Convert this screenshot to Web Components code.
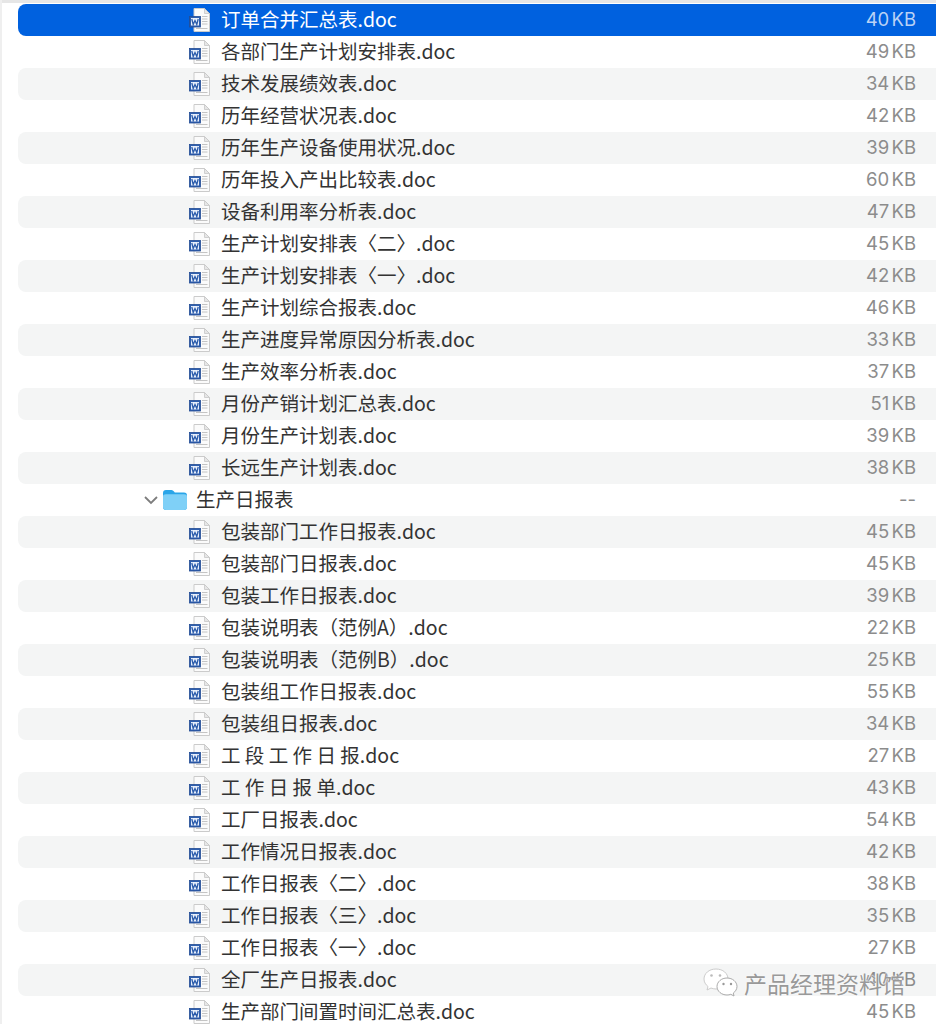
<!DOCTYPE html>
<html><head><meta charset="utf-8"><style>
html,body{margin:0;padding:0;background:#fff;overflow:hidden;height:1024px}
</style></head><body>
<file-list id="l"></file-list>
<script>
class DocIcon extends HTMLElement{constructor(){super();this.attachShadow({mode:'open'}).innerHTML=`<style>:host{display:block;width:24px;height:26px;white-space:normal;line-height:0}svg{display:block}</style><svg width="24" height="26" viewBox="0 0 24 26"><path d="M6 1.500H16.500L21.500 6.500V24.500H6Z" fill="#fbfbfb" stroke="#cbcbcb"/><path d="M16.500 1.500V6.500H21.500Z" fill="#e6e6e6" stroke="#c6c6c6" stroke-width=".8"/><path d="M14 9.500H19.500M14 12H19.500M14 14.500H19.500M14 17H19.500M8 21.500H19.500" stroke="#c4c4c4" stroke-width="1"/><rect x="1.500" y="9.500" width="11" height="10.500" fill="#2f5fae" stroke="#234d95" stroke-width=".8"/><rect x="3" y="11" width="8" height="7.500" fill="#e9f0fb"/><path d="M3.800 12L5.200 17.500L7 13.500L8.800 17.500L10.200 12" fill="none" stroke="#2a5bab" stroke-width="1.300"/></svg>`}}
customElements.define('doc-icon',DocIcon);
class FolderIcon extends HTMLElement{constructor(){super();this.attachShadow({mode:'open'}).innerHTML=`<style>:host{display:block;width:24px;height:22px;white-space:normal;line-height:0}svg{display:block}</style><svg width="24" height="22" viewBox="0 0 24 22"><path d="M0 4Q0 1 3 1H8.500Q10 1 11 2.500L11.800 3.500H21Q24 3.500 24 6.500V18Q24 21 21 21H3Q0 21 0 18Z" fill="#2aa5e8"/><path d="M0 7.500Q0 5.200 3 5.200H21Q24 5.200 24 7.500V18Q24 21 21 21H3Q0 21 0 18Z" fill="#7fd0f7"/></svg>`}}
customElements.define('folder-icon',FolderIcon);
class FileRow extends HTMLElement{connectedCallback(){if(this.shadowRoot)return;const folder=this.hasAttribute('folder');this.attachShadow({mode:'open'}).innerHTML=`<style>
:host{display:flex;align-items:center;height:32px;border-radius:8px 0 0 8px;color:#333;font:19.5px/30px "Noto Sans CJK SC","Liberation Sans",sans-serif;white-space:pre}
:host([striped]){background:#f4f5f5}
:host([selected]){background:#0061df;color:#fff}
.lead{display:flex;align-items:center;flex:none;padding-left:${folder?125:170}px}
.chev{width:16px;margin-right:4px;flex:none}
.name{flex:1;margin-left:9px;padding-bottom:2px}
.size{flex:none;padding-right:20px;text-align:right;color:#8c8c8c;font-family:Inter,"Liberation Sans",sans-serif;font-size:18.5px;word-spacing:-3px;padding-bottom:2px}
:host([selected]) .size{color:#b9d2f5}
</style><div class="lead">${folder?'<svg class="chev" width="16" height="10" viewBox="0 0 16 10"><path d="M2 2L8 8L14 2" fill="none" stroke="#7d7d7d" stroke-width="1.800"/></svg><folder-icon></folder-icon>':'<doc-icon></doc-icon>'}</div><div class="name"><slot></slot></div><div class="size">${this.getAttribute('size')}</div>`}}
customElements.define('file-row',FileRow);
class WaterMark extends HTMLElement{constructor(){super();this.attachShadow({mode:'open'}).innerHTML=`<style>
:host{position:absolute;left:700px;top:963px;display:flex;align-items:center;gap:4px;height:40px;color:#999;font:23px/40px "Noto Sans CJK SC",sans-serif;white-space:pre;text-shadow:0 0 1px #fff,0 0 2px #fff}
</style><svg width="38" height="34" viewBox="0 0 38 34"><path d="M14 3C7 3 2 7.500 2 13C2 16 3.500 18.500 6 20.500L5 24L9 22C10.500 22.500 12 23 14 23C20 23 26 18.500 26 13C26 7.500 21 3 14 3Z" fill="#fff" stroke="#ccc"/><path d="M25 12C19.500 12 15 15.800 15 20.500C15 25.200 19.500 29 25 29C26.500 29 27.500 28.800 28.800 28.300L32 30L31.300 27C33.500 25.500 35 23 35 20.500C35 15.800 30.500 12 25 12Z" fill="#fff" stroke="#aaa"/><circle cx="9.500" cy="9.500" r="1.300" fill="#bbb"/><circle cx="18" cy="9.500" r="1.300" fill="#bbb"/><circle cx="21.500" cy="18" r="1.200" fill="#999"/><circle cx="29" cy="18" r="1.200" fill="#999"/></svg><span>产品经理资料馆</span>`}}
customElements.define('water-mark',WaterMark);
class FileList extends HTMLElement{constructor(){super();this.attachShadow({mode:'open'}).innerHTML=`<style>
:host{display:block;box-sizing:border-box;height:1024px;padding:4px 0 0 16px;position:relative;overflow:hidden;border-left:2px solid #efefef}
:host::before{content:"";position:absolute;left:0;right:0;top:0;height:3px;background:#e6e6e6}
</style><slot></slot><water-mark></water-mark>`}}
customElements.define('file-list',FileList);
const d=[['订单合并汇总表.doc','40'],['各部门生产计划安排表.doc','49'],['技术发展绩效表.doc','34'],['历年经营状况表.doc','42'],['历年生产设备使用状况.doc','39'],['历年投入产出比较表.doc','60'],['设备利用率分析表.doc','47'],['生产计划安排表〈二〉.doc','45'],['生产计划安排表〈一〉.doc','42'],['生产计划综合报表.doc','46'],['生产进度异常原因分析表.doc','33'],['生产效率分析表.doc','37'],['月份产销计划汇总表.doc','51'],['月份生产计划表.doc','39'],['长远生产计划表.doc','38'],['生产日报表',null],['包装部门工作日报表.doc','45'],['包装部门日报表.doc','45'],['包装工作日报表.doc','39'],['包装说明表（范例A）.doc','22'],['包装说明表（范例B）.doc','25'],['包装组工作日报表.doc','55'],['包装组日报表.doc','34'],['工 段 工 作 日 报.doc','27'],['工 作 日 报 单.doc','43'],['工厂日报表.doc','54'],['工作情况日报表.doc','42'],['工作日报表〈二〉.doc','38'],['工作日报表〈三〉.doc','35'],['工作日报表〈一〉.doc','27'],['全厂生产日报表.doc','40'],['生产部门间置时间汇总表.doc','45']];
const l=document.getElementById('l');
d.forEach((r,i)=>{const e=document.createElement('file-row');if(r[1]===null)e.setAttribute('folder','');e.setAttribute('size',r[1]===null?'--':r[1]+' KB');if(i===0)e.setAttribute('selected','');else if(i%2===0)e.setAttribute('striped','');e.textContent=r[0];l.appendChild(e)});
</script></body></html>
